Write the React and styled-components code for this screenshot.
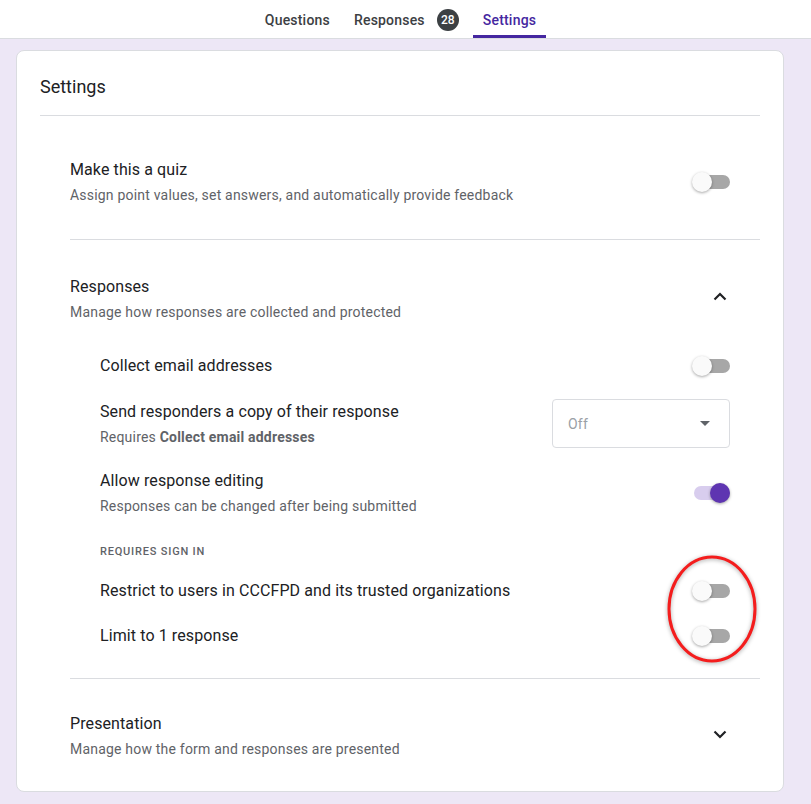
import React from 'react';
import styled, { createGlobalStyle } from 'styled-components';

const GlobalStyle = createGlobalStyle`
  html, body {
    margin: 0;
    padding: 0;
    background: #ede7f6;
    font-family: Roboto, "Noto Sans", Arial, sans-serif;
    color: #202124;
  }
  #root {
    min-height: 100vh;
  }
`;

function Toggle({ on }) {
  return (
    <ToggleBox>
      <Track on={on} />
      <Knob on={on} />
    </ToggleBox>
  );
}

function Chevron({ up }) {
  return (
    <ChevronBox>
      <svg width="24" height="24" viewBox="0 0 24 24">
        <path
          d={up ? 'M6.5 12.5 L12 7 L17.5 12.5' : 'M6.5 7.5 L12 13 L17.5 7.5'}
          fill="none"
          stroke="#202124"
          strokeWidth="2.2"
        />
      </svg>
    </ChevronBox>
  );
}

function SettingRow({ title, sub, children }) {
  return (
    <Row>
      <RowText>
        <RowTitle>{title}</RowTitle>
        {sub && <RowSub>{sub}</RowSub>}
      </RowText>
      {children}
    </Row>
  );
}

function App() {
  return (
    <>
      <GlobalStyle />
      <TopBar>
        <Tab>Questions</Tab>
        <Tab>
          Responses
          <Badge>28</Badge>
        </Tab>
        <Tab active>Settings</Tab>
      </TopBar>

      <Card>
        <CardTitle>Settings</CardTitle>

        <Sections>
          <Section first>
            <SectionHead>
              <RowText>
                <RowTitle>Make this a quiz</RowTitle>
                <RowSub>Assign point values, set answers, and automatically provide feedback</RowSub>
              </RowText>
              <Toggle />
            </SectionHead>
          </Section>

          <Section>
            <SectionHead>
              <RowText>
                <RowTitle>Responses</RowTitle>
                <RowSub>Manage how responses are collected and protected</RowSub>
              </RowText>
              <Chevron up />
            </SectionHead>

            <SubList>
              <SettingRow title="Collect email addresses">
                <Toggle />
              </SettingRow>
              <SettingRow
                title="Send responders a copy of their response"
                sub={
                  <>
                    Requires <b>Collect email addresses</b>
                  </>
                }
              >
                <Select>
                  <span>Off</span>
                  <Caret />
                </Select>
              </SettingRow>
              <SettingRow
                title="Allow response editing"
                sub="Responses can be changed after being submitted"
              >
                <Toggle on />
              </SettingRow>

              <GroupLabel>Requires sign in</GroupLabel>

              <SignInGroup>
                <SettingRow title="Restrict to users in CCCFPD and its trusted organizations">
                  <Toggle />
                </SettingRow>
                <SettingRow title="Limit to 1 response">
                  <Toggle />
                </SettingRow>
                <Highlight width="100" height="120" viewBox="0 0 100 120">
                  <ellipse cx="50" cy="60" rx="43" ry="52" fill="none" stroke="#f41d1d" strokeWidth="3" />
                </Highlight>
              </SignInGroup>
            </SubList>
          </Section>

          <Section last>
            <SectionHead>
              <RowText>
                <RowTitle>Presentation</RowTitle>
                <RowSub>Manage how the form and responses are presented</RowSub>
              </RowText>
              <Chevron />
            </SectionHead>
          </Section>
        </Sections>
      </Card>
    </>
  );
}

export default App;

const TopBar = styled.nav`
  height: 38px;
  background: #fff;
  border-bottom: 1px solid #dadce0;
  display: flex;
  justify-content: center;
  align-items: stretch;
  gap: 4px;
  padding-right: 10px;
`;

const Tab = styled.div`
  display: flex;
  align-items: center;
  padding: 2px 10px 0;
  font-size: 14px;
  font-weight: 500;
  letter-spacing: 0.2px;
  color: ${(p) => (p.active ? '#4527a0' : '#3c4043')};
  box-shadow: ${(p) => (p.active ? 'inset 0 -3px 0 #4527a0' : 'none')};
`;

const Badge = styled.span`
  display: inline-flex;
  align-items: center;
  justify-content: center;
  width: 22px;
  height: 22px;
  border-radius: 50%;
  margin-left: 12px;
  background: #3c4043;
  color: #fff;
  font-size: 12px;
  font-weight: 500;
  letter-spacing: 0;
`;

const Card = styled.main`
  margin: 11px 27px 0 16px;
  background: #fff;
  border: 1px solid #dadce0;
  border-radius: 8px;
  padding: 0 23px;
`;

const CardTitle = styled.h1`
  margin: 0;
  padding: 23px 0 15px;
  font-size: 18px;
  line-height: 26px;
  font-weight: 400;
  color: #202124;
  border-bottom: 1px solid #dadce0;
`;

const Sections = styled.div`
  padding-left: 30px;
`;

const Section = styled.section`
  padding: ${(p) => (p.first ? '42px' : p.last ? '33px' : '35px')} 0
    ${(p) => (p.first ? '34px' : p.last ? '32px' : '35px')};
  border-bottom: ${(p) => (p.last ? 'none' : '1px solid #dadce0')};
`;

const SectionHead = styled.div`
  display: flex;
  align-items: center;
  justify-content: space-between;
  padding-right: 30px;
`;

const RowText = styled.div`
  display: flex;
  flex-direction: column;
  gap: 3px;
`;

const RowTitle = styled.div`
  font-size: 16px;
  line-height: 24px;
  letter-spacing: 0.1px;
  color: #202124;
`;

const RowSub = styled.div`
  font-size: 14px;
  line-height: 20px;
  color: #5f6368;
  letter-spacing: 0.2px;

  b {
    font-weight: 700;
  }
`;

const ChevronBox = styled.div`
  width: 24px;
  height: 24px;
  margin-right: -2px;
`;

const SubList = styled.div`
  display: flex;
  flex-direction: column;
  gap: 21px;
  padding-left: 30px;
  margin-top: 32px;
  margin-bottom: -5px;
`;

const Row = styled.div`
  display: flex;
  align-items: center;
  justify-content: space-between;
  padding-right: 30px;
`;

const ToggleBox = styled.div`
  position: relative;
  width: 38px;
  height: 22px;
  flex-shrink: 0;
`;

const Track = styled.div`
  position: absolute;
  left: 2px;
  right: 0;
  top: 4px;
  height: 14px;
  border-radius: 7px;
  background: ${(p) => (p.on ? '#d8cdee' : '#a7a7a7')};
`;

const Knob = styled.div`
  position: absolute;
  top: 1px;
  left: ${(p) => (p.on ? '18px' : '0')};
  width: 20px;
  height: 20px;
  border-radius: 50%;
  background: ${(p) => (p.on ? '#5e35b1' : '#fafafa')};
  box-shadow: 0 1px 3px rgba(0, 0, 0, 0.35);
`;

const Select = styled.div`
  box-sizing: border-box;
  width: 178px;
  height: 49px;
  border: 1px solid #dadce0;
  border-radius: 4px;
  display: flex;
  align-items: center;
  justify-content: space-between;
  padding: 0 19px 0 15px;
  font-size: 14px;
  letter-spacing: 0.2px;
  color: #9aa0a6;
`;

const Caret = styled.span`
  width: 0;
  height: 0;
  border-left: 5px solid transparent;
  border-right: 5px solid transparent;
  border-top: 5px solid #5f6368;
`;

const GroupLabel = styled.div`
  font-size: 11px;
  line-height: 16px;
  font-weight: 500;
  letter-spacing: 0.8px;
  text-transform: uppercase;
  color: #5f6368;
  margin: 7px 0 -2px;
`;

const SignInGroup = styled.div`
  position: relative;
  display: flex;
  flex-direction: column;
  gap: 21px;
`;

const Highlight = styled.svg`
  position: absolute;
  right: -2px;
  top: -30px;
  pointer-events: none;
  filter: drop-shadow(0 1px 2px rgba(0, 0, 0, 0.35));
`;
